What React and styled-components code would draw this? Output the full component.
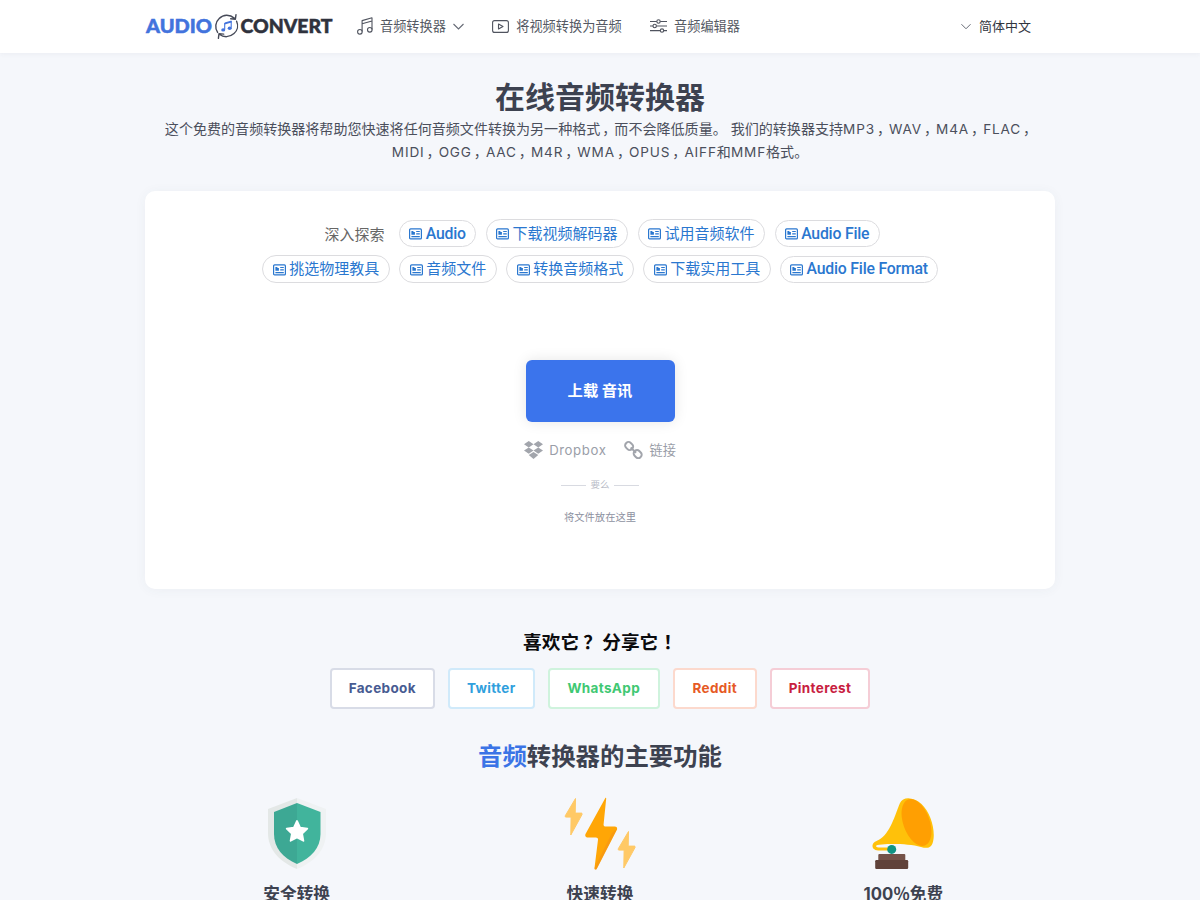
import React from 'react';
import styled, { createGlobalStyle } from 'styled-components';

const cjk = '"Noto Sans CJK SC", sans-serif';

const GlobalStyle = createGlobalStyle`
  * { box-sizing: border-box; }
  body {
    margin: 0;
    background: #f5f7fb;
    color: #3d4250;
    font-family: Inter, ${cjk};
  }
`;

const Page = styled.div`
  height: 900px;
  overflow: hidden;
`;

const Header = styled.header`
  height: 53px;
  background: #fff;
  box-shadow: 0 1px 5px rgba(60, 70, 100, 0.06);
`;

const HeaderInner = styled.div`
  width: 910px;
  height: 52px;
  margin: 0 auto;
  display: flex;
  align-items: center;
`;

const Nav = styled.nav`
  display: flex;
  align-items: center;
  margin-left: 23px;
  gap: 28.3px;
  flex: 1;
`;

const NavItem = styled.a`
  display: flex;
  align-items: center;
  gap: 7px;
  font-size: 13.2px;
  line-height: 20px;
  color: #555963;
  white-space: nowrap;
  svg { display: block; }
`;

const Language = styled(NavItem)`
  font-size: 13px;
  color: #30343e;
  margin-right: 24px;
  gap: 8px;
`;

const Intro = styled.section`
  padding-top: 23px;
  text-align: center;
`;

const Title = styled.h1`
  margin: 0;
  font-size: 30px;
  line-height: 42px;
  font-weight: 700;
`;

const Description = styled.p`
  margin: 0;
  font-size: 14.05px;
  line-height: 22.5px;
  color: #4b4f5c;
`;

const Line = styled.span`
  display: block;
  white-space: nowrap;
`;

const Latin = styled.span`
  font-size: 13.6px;
  letter-spacing: 0.85px;
`;

const Mark = styled.span`
  display: inline-block;
  width: 1em;
  text-align: left;
  text-indent: ${(p) => p.$shift}em;
`;

const Card = styled.main`
  width: 910px;
  height: 398px;
  margin: 28px auto 0;
  padding-top: 28px;
  background: #fff;
  border-radius: 10px;
  box-shadow: 0 1px 12px rgba(60, 70, 100, 0.05);
  display: flex;
  flex-direction: column;
  align-items: center;
`;

const TagRow = styled.div`
  display: flex;
  align-items: center;
  gap: 9.5px;
  height: 29px;
  margin-bottom: 6.5px;
`;

const TagLabel = styled.span`
  font-size: 15px;
  line-height: 22px;
  color: #666;
  margin: 0 5px 0 4px;
  padding-top: 2px;
`;

const Tag = styled.a`
  width: ${(p) => p.$width}px;
  height: ${(p) => (p.$latin ? 27 : 28.5)}px;
  border: 1px solid #dcdcdf;
  border-radius: 15px;
  display: flex;
  align-items: center;
  justify-content: center;
  gap: 3.5px;
  color: #2a77cf;
  font-family: ${(p) => (p.$latin ? 'Roboto' : 'Inter')}, ${cjk};
  font-size: ${(p) => (p.$latin ? 15.8 : 15)}px;
  letter-spacing: ${(p) => (p.$latin ? '-0.2px' : '0')};
  font-weight: ${(p) => (p.$latin ? 500 : 400)};
  line-height: 20px;
  white-space: nowrap;
  svg { flex: none; margin-top: 1px; }
`;

const UploadButton = styled.button`
  width: 149px;
  height: 62px;
  margin-top: 70px;
  flex: none;
  border: 0;
  border-radius: 6px;
  background: #3b74ec;
  box-shadow: 0 0 14px rgba(0, 0, 0, 0.1);
  color: #fff;
  font: 700 15.3px/20px Inter, ${cjk};
`;

const Sources = styled.div`
  display: flex;
  gap: 18px;
  margin-top: 18px;
`;

const Source = styled.a`
  display: flex;
  align-items: center;
  gap: 6px;
  height: 20px;
  font-size: 13.2px;
  line-height: 20px;
  letter-spacing: ${(p) => p.$spacing || 0};
  color: #9a9ea8;
`;

const Divider = styled.div`
  display: flex;
  align-items: center;
  gap: 4px;
  height: 14px;
  margin-top: 18px;
  font-size: 9.5px;
  line-height: 14px;
  color: #b8bbc6;
  &::before, &::after {
    content: '';
    width: 25px;
    height: 1px;
    background: #d8dae1;
  }
`;

const DropHint = styled.div`
  margin-top: 17px;
  font-size: 10.3px;
  line-height: 16px;
  color: #8d919f;
`;

const ShareTitle = styled.h3`
  margin: 40px 0 0;
  text-align: center;
  font-size: 18.7px;
  line-height: 28px;
  font-weight: 700;
  color: #0b0b0d;
`;

const ShareRow = styled.div`
  display: flex;
  justify-content: center;
  gap: 13px;
  margin-top: 10.5px;
`;

const ShareButton = styled.a`
  width: ${(p) => p.$width}px;
  height: 41px;
  display: flex;
  align-items: center;
  justify-content: center;
  border: 2px solid ${(p) => p.$border};
  border-radius: 4px;
  background: #fff;
  color: ${(p) => p.$color};
  font-size: 13.5px;
  font-weight: 700;
  letter-spacing: 0.35px;
`;

const FeatureTitle = styled.h2`
  margin: 29px 0 0;
  text-align: center;
  font-size: 24.4px;
  line-height: 36px;
  font-weight: 700;
  em { font-style: normal; color: #3b74e6; }
`;

const Features = styled.div`
  width: 910px;
  margin: 23px auto 0;
  display: grid;
  grid-template-columns: repeat(3, 1fr);
`;

const Feature = styled.div`
  display: flex;
  flex-direction: column;
  align-items: center;
  svg { display: block; }
  h4 {
    margin: 12.5px 0 0;
    font-size: 16.7px;
    line-height: 24px;
    font-weight: 700;
    white-space: nowrap;
  }
`;

const Logo = () => (
  <svg width="189" height="30" viewBox="0 0 189 30">
    <g fontFamily="Lato, sans-serif" fontWeight="900" fontSize="19.3" strokeWidth="0.5">
      <text x="1" y="21.6" fill="#4273dd" stroke="#4273dd" textLength="66" lengthAdjust="spacingAndGlyphs">AUDIO</text>
      <text x="95.5" y="21.6" fill="#2f323d" stroke="#2f323d" textLength="92" lengthAdjust="spacingAndGlyphs">CONVERT</text>
    </g>
    <g fill="none" stroke="#464a58" strokeWidth="1.4" strokeLinecap="round" strokeLinejoin="round">
      <path d="M72.6 21.4A10.6 10.6 0 0 1 74.2 7.6C78.4 3.2 84.6 3 89.6 7.4M91 3.6l-.6 4.6-4.7-.4" />
      <path d="M91.6 10.2A10.6 10.6 0 0 1 89 22.6C84.6 26.6 78.6 26.6 74.4 23.2M73.4 27.4l.6-4.8 4.7.5" />
    </g>
    <g fill="#4273dd">
      <path d="M79.7 11.4l6.8-2v2l-6.8 2z" />
      <path d="M79.7 12v6.5M86.2 10v6.8" stroke="#4273dd" strokeWidth="1.1" />
      <ellipse cx="78.2" cy="18.9" rx="2" ry="1.7" />
      <ellipse cx="84.7" cy="17.2" rx="2" ry="1.7" />
    </g>
  </svg>
);

const NoteIcon = () => (
  <svg width="16" height="18" viewBox="0 0 16 18" fill="none" stroke="#50545f" strokeWidth="1.1" strokeLinejoin="round">
    <path d="M5.1 14.4V3.6L15 .8v11.8M5.1 6.8L15 4" />
    <circle cx="2.9" cy="14.8" r="2.3" />
    <circle cx="12.8" cy="12.8" r="2.3" />
  </svg>
);

const VideoIcon = () => (
  <svg width="17" height="13" viewBox="0 0 17 13" fill="none" stroke="#50545f" strokeWidth="1.1" strokeLinejoin="round">
    <rect x=".6" y=".6" width="15.8" height="11.8" rx="2" />
    <path d="M6.5 4v5l4.5-2.5z" />
  </svg>
);

const SlidersIcon = () => (
  <svg width="17" height="14" viewBox="0 0 17 14" fill="none" stroke="#50545f" strokeWidth="1.1">
    <path d="M0 2.5h6.8M10.2 2.5H17M0 7h3M6.4 7H17M0 11.6h10.3M13.7 11.6H17" />
    <circle cx="8.5" cy="2.5" r="1.7" />
    <circle cx="4.7" cy="7" r="1.7" />
    <circle cx="12" cy="11.6" r="1.7" />
  </svg>
);

const Chevron = ({ size = 11 }) => (
  <svg width={size} height="7" viewBox="0 0 11 7" fill="none" stroke="#666a75" strokeWidth="1.1">
    <path d="M.5 1l5 5 5-5" />
  </svg>
);

const CardIcon = () => (
  <svg width="13" height="12" viewBox="0 0 13 12" fill="none" stroke="#2a77cf">
    <rect x=".6" y=".9" width="11.8" height="10" rx="1" strokeWidth="1.2" />
    <path d="M2.4 2.9h2v1.2h1.5v2.7H2.4z" fill="#2a77cf" stroke="none" />
    <path d="M7.2 3.5h3.6M7.2 5.8h3.6M2.4 8.6h8.4" strokeWidth="1.2" />
  </svg>
);

const DropboxIcon = () => (
  <svg width="19" height="18" viewBox="0 0 20 18" preserveAspectRatio="none" fill="#a2a5ac">
    <path d="M5 0l5 3.2-5 3.2L0 3.2zM15 0l5 3.2-5 3.2-5-3.2zM0 9.5l5-3.1 5 3.1-5 3.3zM15 6.4l5 3.1-5 3.3-5-3.3zM5 14.1l5-3.2 5 3.2-5 3.9z" />
  </svg>
);

const LinkIcon = () => (
  <svg width="19" height="20" viewBox="0 0 20 20" fill="none" stroke="#a2a5ac" strokeWidth="2.1">
    <rect x="-4.4" y="-3.5" width="8.8" height="7" rx="3.3" transform="translate(5.4 5.8) rotate(45)" />
    <rect x="-4.4" y="-3.5" width="8.8" height="7" rx="3.3" transform="translate(14.4 14.3) rotate(45)" />
    <path d="M7 7.4l5.7 5.5" />
  </svg>
);

const ShieldIcon = () => (
  <svg width="60" height="73" viewBox="0 0 60 73">
    <path d="M30 1L1 12v24c0 17 12 29 29 36z" fill="#e4e8e7" />
    <path d="M30 1l29 11v24c0 17-12 29-29 36z" fill="#eff2f3" />
    <path d="M30 6L7 15v22c0 14 9 24 23 30z" fill="#3da894" />
    <path d="M30 6l23.5 9v22c0 14-9.5 24-23.5 30z" fill="#41b49c" />
    <path d="M30 24l3.1 6.6 7.2 1-5.2 5 1.3 7.2-6.4-3.4-6.4 3.4 1.3-7.2-5.2-5 7.2-1z" fill="#fff" stroke="#fff" strokeWidth="1.8" strokeLinejoin="round" />
  </svg>
);

const SmallBolt = (props) => (
  <path
    d="M11.5 1.5L1.3 18.7c-.4.9.1 1.4.8 1.4h5L6.8 38 18 17.6c.4-.9 0-1.5-.8-1.5h-6z"
    fill="#ffc966"
    stroke="#ffc966"
    strokeLinejoin="round"
    {...props}
  />
);

const BoltsIcon = () => (
  <svg width="72" height="73" viewBox="0 0 72 73">
    <SmallBolt />
    <SmallBolt transform="translate(53 33)" />
    <path d="M41.2 1.2L21.5 37c-.8 2 .2 3.4 1.8 3.4h8.5c1.7 0 2.4 1 2.2 2.4L30.5 71c-.1 1.7 1.3 2.2 2.3.7l20-38.6c.9-2-.1-3.5-2-3.5h-9c-1.7 0-2.4-.9-2.2-2.3L42.2 1.5c0-.8-.6-1-1-.3z" fill="#ffa606" />
    <path d="M53 31.5L32.8 71.7c-1 1.5-2.4 1-2.3-.7L48 36z" fill="#f08c1e" opacity=".45" />
  </svg>
);

const GramophoneIcon = () => (
  <svg width="72" height="73" viewBox="0 0 72 73">
    <path d="M33 6C36-1 47 0 54.5 7 63 15 68 31 66.5 42c-1.1 9-5.5 10-12.5 8-11-3-27-3.4-39-2.6-4 .3-6 .7-6 1.7 0 1.2 2 1.5 4 1.5h12v3H13c-5 0-7.5-1.8-7.5-4.6 0-2.7 2-4.4 6.5-6.3C23 37 28 18 33 6z" fill="#ffc10a" />
    <ellipse cx="49.5" cy="25.5" rx="13.2" ry="24.5" transform="rotate(-20 49.5 25.5)" fill="#ff9f02" />
    <circle cx="24.7" cy="52.4" r="4.5" fill="#109484" />
    <rect x="11.3" y="57" width="27" height="7" rx="1" fill="#745248" />
    <rect x="8.2" y="63" width="33" height="9" rx="1.2" fill="#60423a" />
  </svg>
);

const Comma = () => <Mark $shift={0.14}>，</Mark>;

const Formats = ({ names }) =>
  names.map((name, i) => (
    <React.Fragment key={name}>
      {i > 0 && <Comma />}
      <Latin>{name}</Latin>
    </React.Fragment>
  ));

const tagRows = [
  [
    { text: 'Audio', width: 77, latin: true },
    { text: '下载视频解码器', width: 142.5 },
    { text: '试用音频软件', width: 127.5 },
    { text: 'Audio File', width: 105, latin: true },
  ],
  [
    { text: '挑选物理教具', width: 127.5 },
    { text: '音频文件', width: 97.5 },
    { text: '转换音频格式', width: 127.5 },
    { text: '下载实用工具', width: 127.5 },
    { text: 'Audio File Format', width: 157.5, latin: true },
  ],
];

const shares = [
  { name: 'Facebook', width: 105, color: '#475b92', border: '#d8dce7' },
  { name: 'Twitter', width: 87, color: '#2f9fdd', border: '#d0eafa' },
  { name: 'WhatsApp', width: 112, color: '#3fc873', border: '#cff3dd' },
  { name: 'Reddit', width: 84, color: '#e65a25', border: '#fcd9cd' },
  { name: 'Pinterest', width: 100.5, color: '#c8203f', border: '#f5cdd6' },
];

export default function App() {
  return (
    <Page>
      <GlobalStyle />
      <Header>
        <HeaderInner>
          <Logo />
          <Nav>
            <NavItem><NoteIcon />音频转换器<Chevron /></NavItem>
            <NavItem><VideoIcon />将视频转换为音频</NavItem>
            <NavItem><SlidersIcon />音频编辑器</NavItem>
          </Nav>
          <Language><Chevron size={10} />简体中文</Language>
        </HeaderInner>
      </Header>
      <Intro>
        <Title>在线音频转换器</Title>
        <Description>
          <Line>
            这个免费的音频转换器将帮助您快速将任何音频文件转换为另一种格式<Comma />而不会降低质量。 我们的转换器支持
            <Formats names={['MP3', 'WAV', 'M4A', 'FLAC']} /><Comma />
          </Line>
          <Line>
            <Formats names={['MIDI', 'OGG', 'AAC', 'M4R', 'WMA', 'OPUS', 'AIFF']} />和<Latin>MMF</Latin>格式。
          </Line>
        </Description>
      </Intro>
      <Card>
        {tagRows.map((tags, row) => (
          <TagRow key={row}>
            {row === 0 && <TagLabel>深入探索</TagLabel>}
            {tags.map((tag) => (
              <Tag key={tag.text} $width={tag.width} $latin={tag.latin}>
                <CardIcon />{tag.text}
              </Tag>
            ))}
          </TagRow>
        ))}
        <UploadButton>上载 音讯</UploadButton>
        <Sources>
          <Source $spacing="0.6px"><DropboxIcon />Dropbox</Source>
          <Source><LinkIcon />链接</Source>
        </Sources>
        <Divider>要么</Divider>
        <DropHint>将文件放在这里</DropHint>
      </Card>
      <ShareTitle>喜欢它<Mark $shift={0.22}>？</Mark> 分享它<Mark $shift={0.27}>！</Mark></ShareTitle>
      <ShareRow>
        {shares.map((s) => (
          <ShareButton key={s.name} $width={s.width} $color={s.color} $border={s.border}>
            {s.name}
          </ShareButton>
        ))}
      </ShareRow>
      <FeatureTitle><em>音频</em>转换器的主要功能</FeatureTitle>
      <Features>
        <Feature><ShieldIcon /><h4>安全转换</h4></Feature>
        <Feature><BoltsIcon /><h4>快速转换</h4></Feature>
        <Feature><GramophoneIcon /><h4>100％免费</h4></Feature>
      </Features>
    </Page>
  );
}
